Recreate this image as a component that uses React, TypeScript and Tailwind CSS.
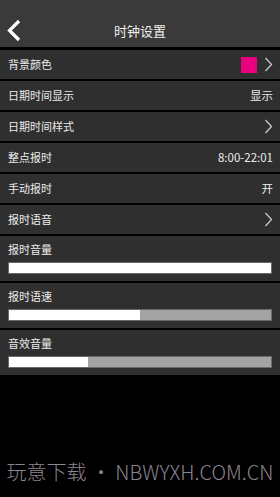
import * as React from "react"

const FONT = { fontFamily: '"Noto Sans CJK SC", "Noto Sans", sans-serif' }

function Chevron() {
  return (
    <svg width="9" height="15" viewBox="0 0 9 15" className="shrink-0">
      <path d="M1.5 1 L7.5 7.5 L1.5 14" fill="none" stroke="#c8c8c8" strokeWidth="1.3" />
    </svg>
  )
}

function Row({ label, children }: { label: string; children?: React.ReactNode }) {
  return (
    <div className="flex h-[29px] items-center justify-between bg-[#2f2f2f] pl-2 pr-[7px]">
      <span className="text-[11px] text-[#ececec]">{label}</span>
      <div className="flex items-center gap-[7px] text-[11.5px] text-[#ececec]">{children}</div>
    </div>
  )
}

function SliderRow({ label, value }: { label: string; value: number }) {
  return (
    <div className="flex h-[45px] flex-col bg-[#2f2f2f] px-2 pt-[5px]">
      <span className="text-[11px] leading-[16px] text-[#ececec]">{label}</span>
      <div className="mt-[5px] flex h-[12px] border border-[#6a6a6a] bg-[#a3a3a3]">
        <div className="h-full bg-white" style={{ width: `${value}%` }} />
      </div>
    </div>
  )
}

export default function App() {
  return (
    <div className="flex h-[497px] w-[280px] flex-col bg-black" style={FONT}>
      <div className="relative flex h-[47px] items-center justify-center bg-[#3a3a3a]">
        <svg width="16" height="24" viewBox="0 0 16 24" className="absolute left-[6px] top-[19px]">
          <path d="M13 2 L3.5 11.5 L13 21" fill="none" stroke="#ffffff" strokeWidth="3.2" />
        </svg>
        <span className="mt-[15px] text-[13px] text-[#f0f0f0]">时钟设置</span>
      </div>
      <div className="mt-[3px] flex flex-col gap-[2px]">
        <Row label="背景颜色">
          <div className="h-4 w-4 bg-[#e8007e]" />
          <Chevron />
        </Row>
        <Row label="日期时间显示">显示</Row>
        <Row label="日期时间样式">
          <Chevron />
        </Row>
        <Row label="整点报时">8:00-22:01</Row>
        <Row label="手动报时">开</Row>
        <Row label="报时语音">
          <Chevron />
        </Row>
        <SliderRow label="报时音量" value={100} />
        <SliderRow label="报时语速" value={50} />
        <SliderRow label="音效音量" value={30} />
      </div>
      <div className="mt-auto mb-[10px] flex justify-center whitespace-nowrap text-[20px] font-light text-[#8c8490]">
        玩意下载 • NBWYXH.COM.CN
      </div>
    </div>
  )
}
